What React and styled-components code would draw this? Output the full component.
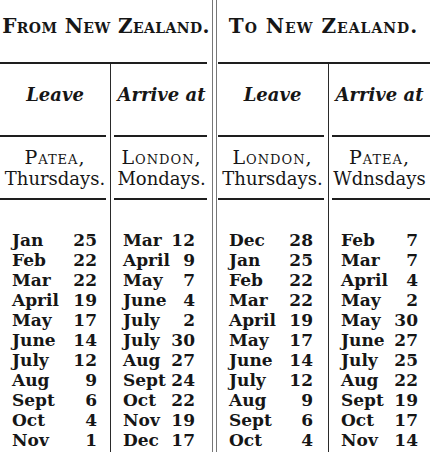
import React from "react";
import styled, { createGlobalStyle } from "styled-components";

const GlobalStyle = createGlobalStyle`
  html, body {
    margin: 0;
    padding: 0;
    background: #ffffff;
  }
  * {
    box-sizing: border-box;
  }
`;

const Page = styled.div`
  display: flex;
  width: 430px;
  height: 452px;
  overflow: hidden;
  background: #ffffff;
  color: #161616;
  font-family: "DejaVu Serif", "Liberation Serif", serif;
`;

const Half = styled.section`
  width: ${props => props.$w}px;
  display: flex;
  flex-direction: column;
`;

const Divider = styled.div`
  width: 5px;
  height: 100%;
  border-left: 1px solid #777;
  border-right: 1px solid #777;
`;

const Title = styled.h2`
  margin: 0;
  height: 62px;
  padding-top: 14px;
  line-height: 24px;
  text-align: center;
  white-space: nowrap;
  font-size: 20px;
  font-weight: bold;
  font-variant: small-caps;
  letter-spacing: ${props => props.$ls || 0}px;
`;

const Rule = styled.div`
  height: 2px;
  background: #1e1e1e;
  margin: 0 ${props => props.$r || 0}px 0 ${props => props.$l || 0}px;
`;

const Cols = styled.div`
  display: flex;
  flex: 1;
`;

const Col = styled.div`
  width: ${props => props.$w}px;
  display: flex;
  flex-direction: column;
  border-left: ${props => (props.$line ? "1px solid #2a2a2a" : "none")};
`;

const SubHead = styled.div`
  height: 71px;
  padding-top: 20px;
  line-height: 22px;
  text-align: center;
  white-space: nowrap;
  font-size: 18px;
  font-style: italic;
  font-weight: bold;
`;

const Place = styled.div`
  height: 61px;
  padding-top: 9px;
  line-height: 22px;
  text-align: center;
  white-space: nowrap;
  font-size: 18px;
`;

const Caps = styled.span`
  display: block;
  font-size: 19px;
  font-variant: small-caps;
  letter-spacing: 1px;
`;

const Dates = styled.ul`
  list-style: none;
  margin: 0;
  padding: 30px ${props => props.$r}px 0 12px;
`;

const DateRow = styled.li`
  display: flex;
  justify-content: space-between;
  height: 20px;
  line-height: 20px;
  font-size: 17px;
  font-weight: bold;
  white-space: nowrap;
`;

const fromLeave = [
  ["Jan", 25], ["Feb", 22], ["Mar", 22], ["April", 19], ["May", 17], ["June", 14],
  ["July", 12], ["Aug", 9], ["Sept", 6], ["Oct", 4], ["Nov", 1],
];
const fromArrive = [
  ["Mar", 12], ["April", 9], ["May", 7], ["June", 4], ["July", 2], ["July", 30],
  ["Aug", 27], ["Sept", 24], ["Oct", 22], ["Nov", 19], ["Dec", 17],
];
const toLeave = [
  ["Dec", 28], ["Jan", 25], ["Feb", 22], ["Mar", 22], ["April", 19], ["May", 17],
  ["June", 14], ["July", 12], ["Aug", 9], ["Sept", 6], ["Oct", 4],
];
const toArrive = [
  ["Feb", 7], ["Mar", 7], ["April", 4], ["May", 2], ["May", 30], ["June", 27],
  ["July", 25], ["Aug", 22], ["Sept", 19], ["Oct", 17], ["Nov", 14],
];

function Column({ w, line, head, place, day, dates, l, r, pr }) {
  return (
    <Col $w={w} $line={line}>
      <SubHead>{head}</SubHead>
      <Rule $l={l} $r={r} />
      <Place>
        <Caps>{place}</Caps>
        {day}
      </Place>
      <Rule $l={l} $r={r} />
      <Dates $r={pr}>
        {dates.map(([m, d], i) => (
          <DateRow key={i}>
            <span>{m}</span>
            <span>{d}</span>
          </DateRow>
        ))}
      </Dates>
    </Col>
  );
}

export default function App() {
  return (
    <>
      <GlobalStyle />
      <Page>
        <Half $w={212}>
          <Title $ls={0.4}>From New Zealand.</Title>
          <Rule $r={5} />
          <Cols>
            <Column w={110} head="Leave" place="Patea," day="Thursdays." dates={fromLeave} l={0} r={4} pr={13} />
            <Column w={102} line head="Arrive at" place="London," day="Mondays." dates={fromArrive} l={3} r={5} pr={17} />
          </Cols>
        </Half>
        <Divider />
        <Half $w={213}>
          <Title $ls={1}>To New Zealand.</Title>
          <Rule $l={1} />
          <Cols>
            <Column w={111} head="Leave" place="London," day="Thursdays." dates={toLeave} l={1} r={4} pr={15} />
            <Column w={102} line head="Arrive at" place="Patea," day="Wdnsdays" dates={toArrive} l={3} r={0} pr={12} />
          </Cols>
        </Half>
      </Page>
    </>
  );
}
